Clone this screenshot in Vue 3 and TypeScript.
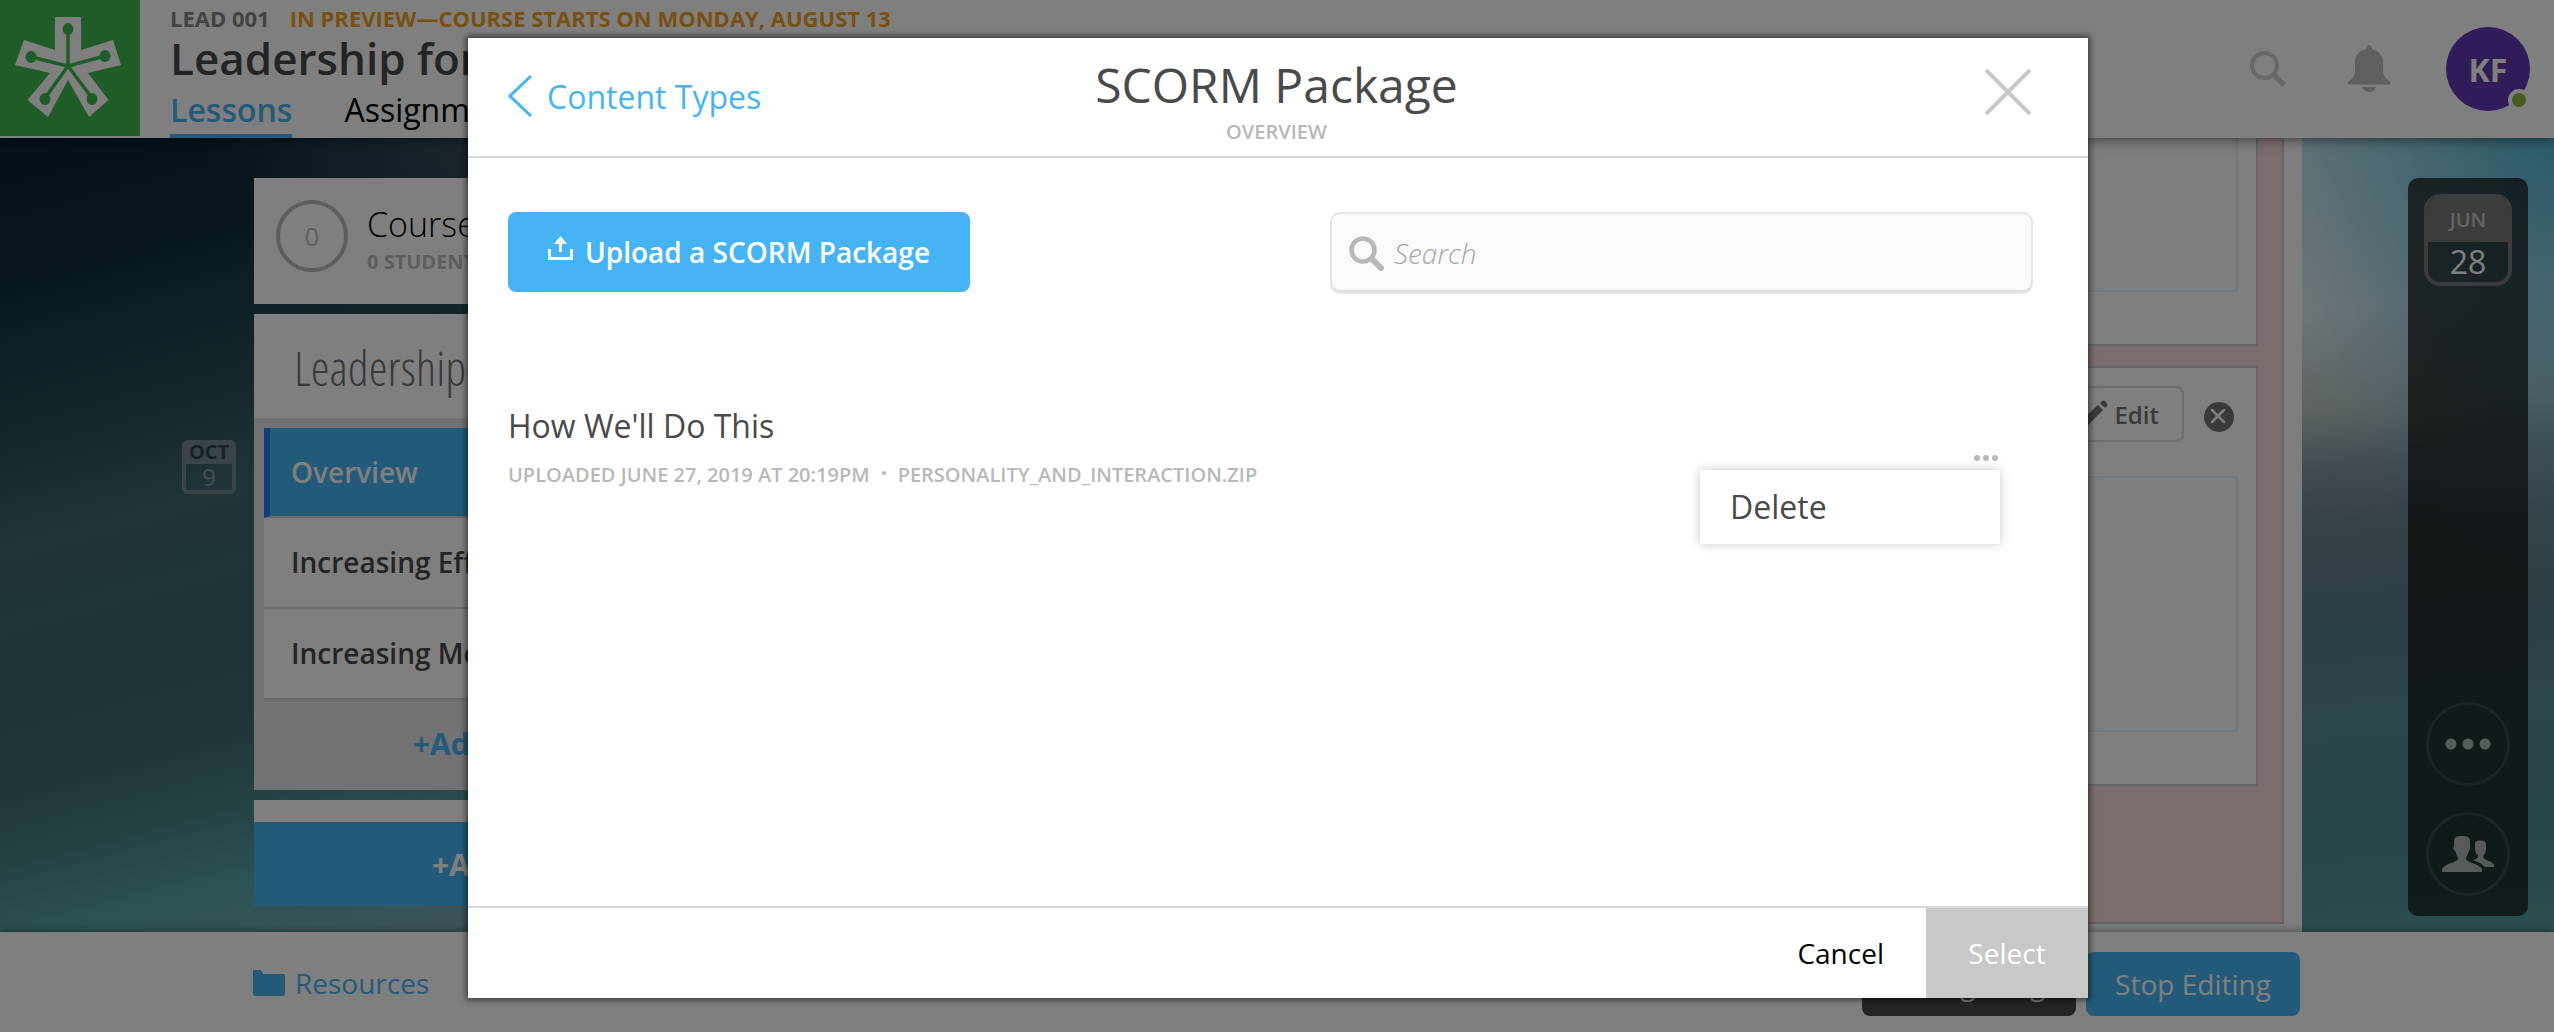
<script setup lang="ts">
import { ref } from 'vue'

interface Lesson {
  title: string
  active: boolean
}

const lessons: Lesson[] = [
  { title: 'Overview', active: true },
  { title: 'Increasing Effectiveness', active: false },
  { title: 'Increasing Motivation', active: false },
]

const query = ref('')
const menuOpen = ref(true)
</script>

<template>
  <div class="page">
    <header class="topbar">
      <a class="logo" href="#" aria-label="Home">
        <svg viewBox="0 0 140 136" width="140" height="136" aria-hidden="true">
          <path
            d="M55 17H81V50L113 40L121 65L88 73L108.500 100L89 117L68 80L48 117L27.500 100L50 73L15 65L24 40L55 50Z"
            fill="#fff"
          />
          <g stroke="#3eb84f" stroke-width="3.500" fill="none">
            <path d="M68 66V30M68 66L31 57M68 66L105 56M68 66L45 98M68 66L92 98" />
          </g>
          <g fill="#3eb84f">
            <ellipse cx="68" cy="29" rx="5.500" ry="6" />
            <ellipse cx="31" cy="57" rx="5.500" ry="6" />
            <ellipse cx="105" cy="56" rx="5.500" ry="6" />
            <ellipse cx="45" cy="99" rx="5.500" ry="6" />
            <ellipse cx="92" cy="99" rx="5.500" ry="6" />
          </g>
        </svg>
      </a>
      <div class="course">
        <div class="course-meta">
          <span>LEAD 001</span>
          <span class="preview">IN PREVIEW—COURSE STARTS ON MONDAY, AUGUST 13</span>
        </div>
        <div class="course-title">Leadership for</div>
        <nav class="tabs">
          <a class="tab active" href="#">Lessons</a>
          <a class="tab" href="#">Assignments</a>
        </nav>
      </div>
      <div class="tools">
        <button type="button" class="plain find" aria-label="Search">
          <svg viewBox="0 0 36 36" width="36" height="36" fill="none" stroke="#d0d0d0">
            <circle cx="14.500" cy="14.500" r="12.500" stroke-width="4" />
            <path d="M24 24L34 34" stroke-width="5.500" />
          </svg>
        </button>
        <button type="button" class="plain" aria-label="Notifications">
          <svg viewBox="0 0 42 48" width="42" height="48" fill="#bebebe">
            <path
              d="M21 0C22.500 0 23.500 2 24.500 4.500C31 6 35 10.500 35 17V24C35 30 36.500 33 42 36.500V39.500H0V36.500C5.500 33 7 30 7 24V17C7 10.500 11 6 17.500 4.500C18.500 2 19.500 0 21 0Z"
            />
            <path d="M14 42H28C26.500 45.500 24 47 21 47S15.500 45.500 14 42Z" />
          </svg>
        </button>
        <button type="button" class="avatar">KF<span class="status"></span></button>
      </div>
    </header>

    <main class="main">
      <aside class="dates">
        <div class="mini-cal">
          <span class="mini-month">OCT</span>
          <span class="mini-day">9</span>
        </div>
      </aside>

      <section class="sidebar">
        <div class="card progress">
          <span class="ring">0</span>
          <div>
            <div class="progress-title">Course Progress</div>
            <div class="progress-sub">0 STUDENTS</div>
          </div>
        </div>
        <div class="card">
          <h2 class="unit-title">Leadership</h2>
          <div class="lessons">
            <a
              v-for="lesson in lessons"
              :key="lesson.title"
              href="#"
              class="lesson"
              :class="{ active: lesson.active }"
              >{{ lesson.title }}</a
            >
            <button type="button" class="add-lesson">+Add Lesson</button>
          </div>
        </div>
        <div class="card add-card">
          <button type="button" class="add-unit">+Add Unit</button>
        </div>
      </section>

      <section class="content">
        <div class="canvas">
          <div class="block first"><div class="well short"></div></div>
          <div class="block">
            <div class="block-tools">
              <button type="button" class="edit">
                <svg viewBox="0 0 28 28" width="28" height="28" fill="#747474">
                  <path d="M0 28L3 19L18 5L23 10L8 25ZM20 3L22 1C24 -1 29 4 27 6L25 8Z" />
                </svg>
                Edit
              </button>
              <button type="button" class="plain remove" aria-label="Remove">
                <svg viewBox="0 0 30 30" width="30" height="30">
                  <circle cx="15" cy="15" r="15" fill="#747474" />
                  <path d="M8 8L20 20M20 8L8 20" stroke="#fff" stroke-width="2.500" stroke-linecap="round" />
                </svg>
              </button>
            </div>
            <div class="well tall"></div>
          </div>
        </div>
      </section>

      <aside class="rail-column">
        <div class="rail">
          <div class="cal">
            <span class="cal-month">JUN</span>
            <span class="cal-day">28</span>
          </div>
          <div class="rail-actions">
            <button type="button" class="round" aria-label="More">
              <svg viewBox="0 0 46 12" width="46" height="12" fill="#aeb4b6">
                <circle cx="6" cy="6" r="5.500" />
                <circle cx="23" cy="6" r="5.500" />
                <circle cx="40" cy="6" r="5.500" />
              </svg>
            </button>
            <button type="button" class="round" aria-label="People">
              <svg viewBox="0 0 52 36" width="52" height="36" fill="#aeb4b6">
                <path
                  d="M12 5C12 1 15 0 20 0S28 1 28 5V10C28.500 12 28 14 26.500 15.500C26 19 24.500 20 24 21.500V23.500C26 26.500 37 28 40 33V36H0V33C2 28 14 26.500 16 23.500V21.500C15 20 14 18 13.500 15.500C11 13.500 11 11.500 12 10Z"
                />
                <path
                  d="M33 8C33 5 35 4.500 38.500 4.500S44 5.500 44 8V13C44 16 43 17.500 41.500 19.500V22C44 25 51 25 52 29V31H43C40 27.500 35 25.500 31 24C34 23 36 22.500 36 19.500C33.500 17 32.500 14 33 12Z"
                />
              </svg>
            </button>
          </div>
        </div>
      </aside>
    </main>

    <footer class="bottombar">
      <a class="resources" href="#">
        <svg viewBox="0 0 32 26" width="32" height="26" fill="#46b4f4">
          <path d="M0 0H8L10 4H30Q32 4 32 6V24Q32 26 30 26H2Q0 26 0 24Z" />
        </svg>
        Resources
      </a>
      <div class="bottom-actions">
        <button type="button" class="pill dark">Change Log</button>
        <button type="button" class="pill">Stop Editing</button>
      </div>
    </footer>

    <div class="overlay">
      <div class="modal" role="dialog" aria-labelledby="dialog-title">
        <div class="modal-head">
          <a class="back" href="#">
            <svg viewBox="0 0 24 42" width="24" height="42" fill="none" stroke="#46b4f4" stroke-width="3">
              <path d="M23 1L2 21L23 41" />
            </svg>
            Content Types
          </a>
          <div class="modal-titles">
            <h1 id="dialog-title">SCORM Package</h1>
            <p>OVERVIEW</p>
          </div>
          <button type="button" class="plain close" aria-label="Close">
            <svg viewBox="0 0 46 46" width="46" height="46" stroke="#c8c8c8" stroke-width="4">
              <path d="M1 1L45 45M45 1L1 45" />
            </svg>
          </button>
        </div>

        <div class="modal-body">
          <div class="toolbar">
            <button type="button" class="upload">
              <svg viewBox="0 0 25 24" width="25" height="24" fill="none" stroke="#fff" stroke-width="3">
                <path d="M1.500 13V22.500H23.500V13M12.500 16V6" />
                <path d="M12.500 0L19 8H6Z" fill="#fff" stroke="none" />
              </svg>
              Upload a SCORM Package
            </button>
            <label class="search">
              <svg viewBox="0 0 35 35" width="35" height="35" fill="none" stroke="#b8b8b8">
                <circle cx="14" cy="14" r="11.500" stroke-width="4.500" />
                <path d="M23 23L32 32" stroke-width="6" stroke-linecap="round" />
              </svg>
              <input v-model="query" type="text" placeholder="Search" aria-label="Search" />
            </label>
          </div>

          <div class="package">
            <div>
              <div class="package-name">How We'll Do This</div>
              <div class="package-meta">
                <span>UPLOADED JUNE 27, 2019 AT 20:19PM</span>
                <span class="dot"></span>
                <span>PERSONALITY_AND_INTERACTION.ZIP</span>
              </div>
            </div>
            <div class="more">
              <button type="button" class="plain more-button" aria-label="Options" @click="menuOpen = !menuOpen">
                <svg viewBox="0 0 24 6" width="24" height="6" fill="#b8b8b8">
                  <circle cx="3" cy="3" r="3" />
                  <circle cx="12" cy="3" r="3" />
                  <circle cx="21" cy="3" r="3" />
                </svg>
              </button>
              <div v-if="menuOpen" class="menu">
                <button type="button">Delete</button>
              </div>
            </div>
          </div>
        </div>

        <div class="modal-foot">
          <button type="button" class="foot-button">Cancel</button>
          <button type="button" class="foot-button select">Select</button>
        </div>
      </div>
    </div>
  </div>
</template>

<style>
body {
  margin: 0;
}
</style>

<style scoped>
* {
  box-sizing: border-box;
}

.page {
  position: relative;
  display: flex;
  flex-direction: column;
  min-height: 100vh;
  overflow: hidden;
  font-family: 'Open Sans', 'Noto Sans', sans-serif;
  font-size: 28px;
  color: #484848;
  background:
    radial-gradient(ellipse 280px 460px at 100% 12%, rgba(70, 176, 210, 0.9), rgba(70, 176, 210, 0)) no-repeat,
    radial-gradient(ellipse 300px 160px at 500px 130px, rgba(80, 96, 110, 0.7), rgba(80, 96, 110, 0)) no-repeat,
    linear-gradient(
        175deg,
        #c8e6ec 22%,
        #e0ecf0 35%,
        #b8c4c4 44%,
        #8494a0 49%,
        #68808c 55%,
        #58808e 63%,
        #568a96 70%,
        #4a8a94 82%,
        #569c9e 90%
      )
      right / 50% 100% no-repeat,
    linear-gradient(
        165deg,
        #082034 10%,
        #0e2c3a 20%,
        #1c3e4a 26%,
        #2c5058 33%,
        #42686e 40%,
        #3c6a70 48%,
        #3e6a70 57%,
        #4a8486 63%,
        #58a6a8 69%,
        #78a8b0 76%
      )
      left / 50% 100% no-repeat;
}

a {
  color: inherit;
  text-decoration: none;
}

button {
  padding: 0;
  border: 0;
  font: inherit;
  color: inherit;
  background: none;
}

svg {
  display: block;
  flex: none;
}

.plain {
  display: flex;
  align-items: center;
  justify-content: center;
}

.topbar {
  position: relative;
  display: flex;
  height: 138px;
  background: #fff;
  box-shadow: 0 2px 12px rgba(0, 0, 0, 0.5);
}

.logo {
  width: 140px;
  height: 136px;
  background: #3eb84f;
}

.course {
  margin-left: 30px;
  white-space: nowrap;
}

.course-meta {
  display: flex;
  gap: 20px;
  font-size: 22px;
  font-weight: 700;
  line-height: 36px;
  color: #868686;
}

.preview {
  color: #f0a020;
}

.course-title {
  font-size: 44px;
  font-weight: 600;
  line-height: 44px;
}

.tabs {
  display: flex;
  gap: 52px;
  font-size: 32px;
  color: #000;
}

.tab {
  height: 58px;
  line-height: 60px;
}

.tab.active {
  font-weight: 600;
  color: #46b4f4;
  border-bottom: 4px solid #46b4f4;
}

.tools {
  display: flex;
  align-items: center;
  gap: 56px;
  margin-left: auto;
  padding-right: 24px;
}

.find {
  margin-right: 6px;
}

.avatar {
  position: relative;
  width: 84px;
  height: 84px;
  border-radius: 50%;
  font-size: 32px;
  font-weight: 700;
  color: #fff;
  background: #5e38b2;
}

.status {
  position: absolute;
  right: 0;
  bottom: 0;
  width: 22px;
  height: 22px;
  border: 4px solid #fff;
  border-radius: 50%;
  background: #8cba3c;
}

.main {
  display: flex;
  flex: 1;
}

.dates {
  flex: 0 0 254px;
  padding: 302px 0 0 182px;
}

.mini-cal {
  display: flex;
  flex-direction: column;
  width: 54px;
  height: 54px;
  border: 4px solid #72888e;
  border-top: 0;
  border-radius: 6px;
  text-align: center;
}

.mini-month {
  font-size: 20px;
  font-weight: 700;
  line-height: 24px;
  color: #2a4248;
  background: #72888e;
}

.mini-day {
  font-size: 24px;
  line-height: 26px;
  color: #8a9ea2;
}

.sidebar {
  display: flex;
  flex: 0 0 504px;
  flex-direction: column;
  gap: 10px;
  padding-top: 40px;
}

.card {
  background: #fff;
}

.progress {
  display: flex;
  gap: 19px;
  height: 126px;
  padding: 22px;
}

.ring {
  width: 72px;
  height: 72px;
  border: 4px solid #bcbcbc;
  border-radius: 50%;
  font-size: 26px;
  line-height: 64px;
  text-align: center;
  color: #bcbcbc;
}

.progress-title {
  font-size: 34px;
  font-weight: 300;
  line-height: 48px;
  color: #000;
}

.progress-sub {
  font-size: 20px;
  font-weight: 700;
  line-height: 28px;
  color: #bcbcbc;
}

.unit-title {
  height: 104px;
  margin: 0;
  padding-left: 40px;
  font-family: 'Open Sans Condensed Light', 'OpenSans Condensed Light', 'Open Sans Condensed', 'Liberation Sans Narrow', sans-serif;
  font-size: 48px;
  font-weight: 300;
  line-height: 108px;
  color: #747474;
}

.lessons {
  padding: 10px 0 0 10px;
  background: #e4e4e4;
}

.lesson {
  display: block;
  height: 91px;
  padding-left: 27px;
  border-bottom: 2px solid #d2d2d2;
  font-weight: 600;
  line-height: 89px;
  background: #fff;
}

.lesson.active {
  height: 90px;
  padding-left: 21px;
  border-left: 6px solid #1b7ef8;
  line-height: 88px;
  color: #fff;
  background: #46b4f4;
}

.add-lesson,
.add-unit {
  width: 100%;
  font-size: 30px;
  font-weight: 700;
}

.add-lesson {
  height: 90px;
  padding: 0 10px 4px 0;
  color: #46b4f4;
}

.add-card {
  padding-top: 22px;
}

.add-unit {
  height: 84px;
  color: #fff;
  background: #46b4f4;
}

.content {
  display: flex;
  flex: 1;
  margin-left: 20px;
  padding: 0 18px 8px;
  background: #fdfdfd;
}

.canvas {
  display: flex;
  flex: 1;
  flex-direction: column;
  gap: 20px;
  padding: 0 24px;
  border: 2px solid #ccc;
  border-top: 0;
  background: #f8dcdc;
}

.block {
  padding: 18px 18px 52px;
  border: 2px solid #ccc;
  background: #fff;
}

.block.first {
  padding-top: 0;
  border-top: 0;
}

.well {
  border: 2px solid #e6f2f8;
  background: #fbfcff;
}

.well.short {
  height: 154px;
  border-top: 0;
}

.well.tall {
  height: 256px;
  margin-top: 34px;
}

.block-tools {
  display: flex;
  align-items: center;
  justify-content: flex-end;
  gap: 20px;
  padding-right: 4px;
}

.edit {
  display: flex;
  align-items: center;
  gap: 6px;
  height: 56px;
  padding: 0 23px;
  border: 2px solid #dcdcdc;
  border-radius: 8px;
  font-size: 24px;
  font-weight: 600;
  color: #747474;
}

.remove {
  padding-top: 6px;
}

.rail-column {
  display: flex;
  flex: 0 0 252px;
  padding: 40px 26px 16px 106px;
}

.rail {
  display: flex;
  flex: 1;
  flex-direction: column;
  align-items: center;
  justify-content: space-between;
  padding: 16px 0 20px;
  border-radius: 10px;
  background: rgba(16, 16, 16, 0.72);
}

.cal {
  display: flex;
  flex-direction: column;
  width: 88px;
  height: 92px;
  border: 4px solid #787878;
  border-top: 0;
  border-radius: 16px;
  text-align: center;
  overflow: hidden;
}

.cal-month {
  height: 48px;
  font-size: 20px;
  font-weight: 600;
  line-height: 52px;
  color: #c8c8c8;
  background: #787878;
}

.cal-day {
  font-size: 32px;
  line-height: 40px;
  color: #fff;
}

.rail-actions {
  display: flex;
  flex-direction: column;
  gap: 26px;
}

.round {
  display: flex;
  align-items: center;
  justify-content: center;
  width: 84px;
  height: 84px;
  border: 3px solid rgba(255, 255, 255, 0.1);
  border-radius: 50%;
}

.bottombar {
  position: relative;
  display: flex;
  align-items: center;
  justify-content: space-between;
  height: 100px;
  padding: 2px 254px 0 253px;
  background: #fff;
  box-shadow: 0 -2px 8px rgba(0, 0, 0, 0.3);
}

.resources {
  display: flex;
  align-items: center;
  gap: 10px;
  color: #46b4f4;
}

.bottom-actions {
  display: flex;
  gap: 10px;
  padding-top: 2px;
}

.pill {
  width: 214px;
  height: 64px;
  border-radius: 8px;
  color: #fff;
  background: #46b4f4;
}

.pill.dark {
  background: #484848;
}

.overlay {
  position: absolute;
  inset: 0;
  display: flex;
  padding: 38px 466px 34px 468px;
  background: rgba(0, 0, 0, 0.5);
}

.modal {
  display: flex;
  flex: 1;
  flex-direction: column;
  background: #fff;
  box-shadow: 0 0 6px 2px rgba(0, 0, 0, 0.55);
}

.modal-head {
  display: grid;
  grid-template-columns: 1fr auto 1fr;
  height: 120px;
  padding: 0 57px 0 40px;
  border-bottom: 2px solid #d8d8d8;
}

.back {
  display: flex;
  align-items: center;
  gap: 15px;
  height: 116px;
  font-size: 32px;
  color: #46b4f4;
}

.modal-titles {
  padding: 14px 0 0 14px;
  text-align: center;
}

.modal-titles h1 {
  margin: 0;
  font-size: 48px;
  font-weight: 400;
  line-height: 66px;
  color: #4a4a4a;
}

.modal-titles p {
  margin: 0;
  font-size: 20px;
  font-weight: 600;
  line-height: 28px;
  color: #b8b8b8;
}

.close {
  height: 108px;
  margin-left: auto;
}

.modal-body {
  flex: 1;
  padding: 54px 55px 0 40px;
}

.toolbar {
  display: flex;
  justify-content: space-between;
  height: 80px;
}

.upload {
  display: flex;
  align-items: center;
  gap: 12px;
  padding: 0 40px;
  border-radius: 8px;
  font-weight: 600;
  color: #fff;
  background: #46b4f4;
}

.upload svg {
  margin-bottom: 8px;
}

.search {
  display: flex;
  flex: 0 0 703px;
  align-items: center;
  gap: 10px;
  padding: 2px 17px 0;
  border: 2px solid #e6e6e6;
  border-bottom-color: #dedede;
  border-radius: 10px;
  background: #fafafa;
  box-shadow: 0 2px 0 #e8e8e8;
}

.search input {
  flex: 1;
  min-width: 0;
  padding: 0;
  border: 0;
  outline: 0;
  font: inherit;
  font-style: italic;
  font-weight: 300;
  color: #4a4a4a;
  background: none;
}

.search input::placeholder {
  color: #a8a8a8;
  opacity: 1;
}

.package {
  display: flex;
  justify-content: space-between;
  margin-top: 112px;
  padding-right: 33px;
}

.package-name {
  font-size: 32px;
  line-height: 44px;
  color: #4a4a4a;
}

.package-meta {
  display: flex;
  align-items: center;
  gap: 12px;
  font-size: 20px;
  font-weight: 600;
  line-height: 54px;
  color: #b8b8b8;
}

.dot {
  width: 4px;
  height: 4px;
  margin-bottom: 4px;
  border-radius: 50%;
  background: #b8b8b8;
}

.more {
  position: relative;
  padding: 44px 2px 0 0;
}

.more-button {
  height: 20px;
}

.menu {
  position: absolute;
  top: 66px;
  right: 0;
  width: 300px;
  background: #fff;
  box-shadow: 0 0 10px rgba(0, 0, 0, 0.22);
}

.menu button {
  width: 100%;
  height: 74px;
  padding: 0 30px 2px;
  font-size: 32px;
  text-align: left;
  color: #4a4a4a;
}

.modal-foot {
  display: flex;
  justify-content: flex-end;
  height: 92px;
  border-top: 2px solid #d8d8d8;
}

.foot-button {
  padding: 0 42px;
  color: #000;
}

.foot-button.select {
  width: 162px;
  color: #fff;
  background: #c8c8c8;
}
</style>
